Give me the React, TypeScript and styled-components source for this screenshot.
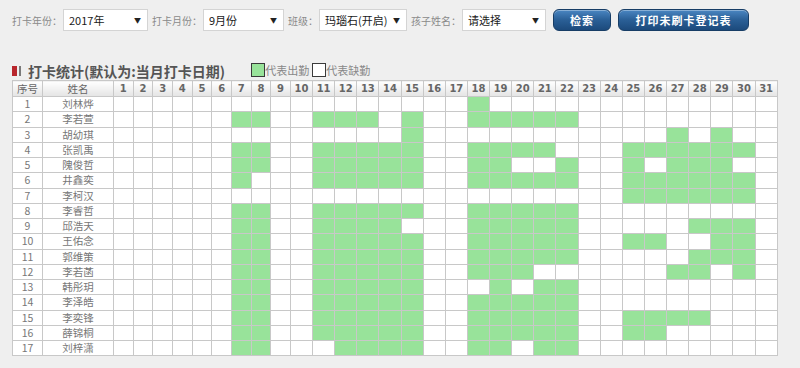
import React from 'react';
import styled, { createGlobalStyle } from 'styled-components';

const GlobalStyle = createGlobalStyle`
  body {
    margin: 0;
    background: #efefef;
    font-family: 'Noto Sans CJK SC', 'Noto Sans', sans-serif;
  }
`;

const days = Array.from({ length: 31 }, (_, i) => i + 1);

const range = (a: number, b: number) =>
  Array.from({ length: b - a + 1 }, (_, i) => a + i);

const students = [
  { name: '刘林烨', present: [18] },
  { name: '李若萱', present: [7, 8, 11, 12, 13, 15, 18, 19, 20, 21, 22] },
  { name: '胡幼琪', present: [15, 27, 29] },
  { name: '张凯禹', present: [7, 8, ...range(11, 15), 18, 19, 20, 21, ...range(25, 30)] },
  { name: '隗俊哲', present: [7, 8, ...range(11, 15), 18, 19, 22, 25, 27, 28, 29] },
  { name: '井鑫奕', present: [7, ...range(11, 15), ...range(18, 22), ...range(25, 30)] },
  { name: '李柯汉', present: range(25, 30) },
  { name: '李睿哲', present: [7, 8, ...range(11, 15), ...range(18, 22)] },
  { name: '邱浩天', present: [7, 8, ...range(11, 14), ...range(18, 22), 28, 29, 30] },
  { name: '王佑念', present: [7, 8, ...range(11, 15), ...range(18, 22), 25, 26, 29, 30] },
  { name: '郭维策', present: [7, 8, ...range(11, 15), ...range(18, 22), 28, 29, 30] },
  { name: '李若菡', present: [7, 8, ...range(11, 15), 18, 19, 20, 27, 28, 30] },
  { name: '韩彤玥', present: [7, 8, ...range(11, 15), 19, 21, 22] },
  { name: '李泽皓', present: [7, 8, ...range(11, 15), ...range(18, 22)] },
  { name: '李奕锋', present: [7, 8, ...range(11, 15), ...range(18, 22), 25, 26, 27, 28] },
  { name: '薛锦桐', present: [7, 8, ...range(11, 15), ...range(18, 22), 25, 26] },
  { name: '刘梓潇', present: [7, 8, ...range(12, 15), 18, 19, 21, 22] },
];

const selects = [
  { label: '打卡年份：', value: '2017年', width: 85 },
  { label: '打卡月份：', value: '9月份', width: 81 },
  { label: '班级：', value: '玛瑙石(开启)', width: 88 },
  { label: '孩子姓名：', value: '请选择', width: 84 },
];

const App = () => {
  return (
    <Page>
      <GlobalStyle />
      <Toolbar>
        {selects.map((s) => (
          <Field key={s.label}>
            <Label>{s.label}</Label>
            <SelectBox $width={s.width}>
              <span>{s.value}</span>
              <Arrow>▼</Arrow>
            </SelectBox>
          </Field>
        ))}
        <Button $width={58}>检索</Button>
        <Button $width={131}>打印未刷卡登记表</Button>
      </Toolbar>

      <HeadingRow>
        <Title>
          <RedMark />
          <GrayMark />
          <TitleText>打卡统计(默认为:当月打卡日期)</TitleText>
        </Title>
        <Legend>
          <LegendBox $on />
          <LegendText>代表出勤</LegendText>
          <LegendBox />
          <LegendText>代表缺勤</LegendText>
        </Legend>
      </HeadingRow>

      <Table>
        <colgroup>
          <col style={{ width: 30 }} />
          <col style={{ width: 71 }} />
          {days.map((d) => (
            <col key={d} style={{ width: d < 10 ? 19.67 : 22.14 }} />
          ))}
        </colgroup>
        <thead>
          <tr>
            <Th>序号</Th>
            <Th>姓名</Th>
            {days.map((d) => (
              <Th key={d} $num>
                {d}
              </Th>
            ))}
          </tr>
        </thead>
        <tbody>
          {students.map((s, i) => (
            <tr key={s.name}>
              <Td>{i + 1}</Td>
              <Td>{s.name}</Td>
              {days.map((d) => (
                <Td key={d} $on={s.present.includes(d)} />
              ))}
            </tr>
          ))}
        </tbody>
      </Table>
    </Page>
  );
};

export default App;

const Page = styled.div`
  padding: 9px 12px 0;
  width: 800px;
  height: 368px;
  box-sizing: border-box;
  overflow: hidden;
`;

const Toolbar = styled.div`
  display: flex;
  align-items: center;
  height: 22px;
  gap: 4px;
`;

const Field = styled.div`
  display: flex;
  align-items: center;
`;

const Label = styled.span`
  font-size: 10px;
  color: #8a8a8a;
  margin-right: 1px;
  white-space: nowrap;
`;

const SelectBox = styled.div<{ $width: number }>`
  width: ${(p) => p.$width}px;
  height: 22px;
  box-sizing: border-box;
  border: 1px solid #d4d4d4;
  background: #fff;
  display: flex;
  align-items: center;
  justify-content: space-between;
  padding: 0 6px 0 5px;
  font-size: 11px;
  color: #1a1a1a;
`;

const Arrow = styled.span`
  font-size: 7px;
  color: #222;
`;

const Button = styled.div<{ $width: number }>`
  width: ${(p) => p.$width}px;
  height: 22px;
  box-sizing: border-box;
  margin-left: 3px;
  border: 1px solid #173d66;
  border-radius: 6px;
  background: linear-gradient(#4a86c2, #2a5f96 50%, #1c4a7c);
  box-shadow: inset 0 1px 0 rgba(255, 255, 255, 0.35);
  color: #fff;
  font-size: 11px;
  font-weight: bold;
  letter-spacing: 1px;
  display: flex;
  align-items: center;
  justify-content: center;
`;

const HeadingRow = styled.div`
  display: flex;
  align-items: flex-end;
  height: 18px;
  margin-top: 31px;
`;

const Title = styled.div`
  display: flex;
  align-items: center;
`;

const RedMark = styled.span`
  width: 5px;
  height: 10px;
  background: #b8262c;
`;

const GrayMark = styled.span`
  width: 2px;
  height: 10px;
  margin-left: 2px;
  background: #7a7a7a;
`;

const TitleText = styled.span`
  margin-left: 7px;
  font-size: 14px;
  font-weight: bold;
  color: #555;
  line-height: 18px;
`;

const Legend = styled.div`
  display: flex;
  align-items: center;
  margin-left: 26px;
  margin-bottom: 2px;
`;

const LegendBox = styled.span<{ $on?: boolean }>`
  width: 14px;
  height: 14px;
  box-sizing: border-box;
  border: 1px solid #3a3a3a;
  background: ${(p) => (p.$on ? '#98e39a' : '#fff')};
`;

const LegendText = styled.span`
  font-size: 11px;
  color: #888;
  margin-right: 3px;
`;

const Table = styled.table`
  border-collapse: collapse;
  table-layout: fixed;
  width: 765px;
  background: #fff;
`;

const Th = styled.th<{ $num?: boolean }>`
  height: 15px;
  padding: 0;
  border: 1px solid #c8c8c8;
  background: linear-gradient(#ffffff, #e4e4e4);
  color: #666;
  text-align: center;
  font-family: ${(p) =>
    p.$num ? "'DejaVu Sans', sans-serif" : "'Noto Sans CJK SC', sans-serif"};
  font-size: ${(p) => (p.$num ? '10px' : '10.5px')};
  font-weight: ${(p) => (p.$num ? 'bold' : 'normal')};
  line-height: 14px;
`;

const Td = styled.td<{ $on?: boolean }>`
  height: 14.25px;
  padding: 0;
  border: 1px solid #c8c8c8;
  background: ${(p) => (p.$on ? '#98e39a' : '#fff')};
  color: #777;
  text-align: center;
  font-size: 10.5px;
  line-height: 14px;
`;
